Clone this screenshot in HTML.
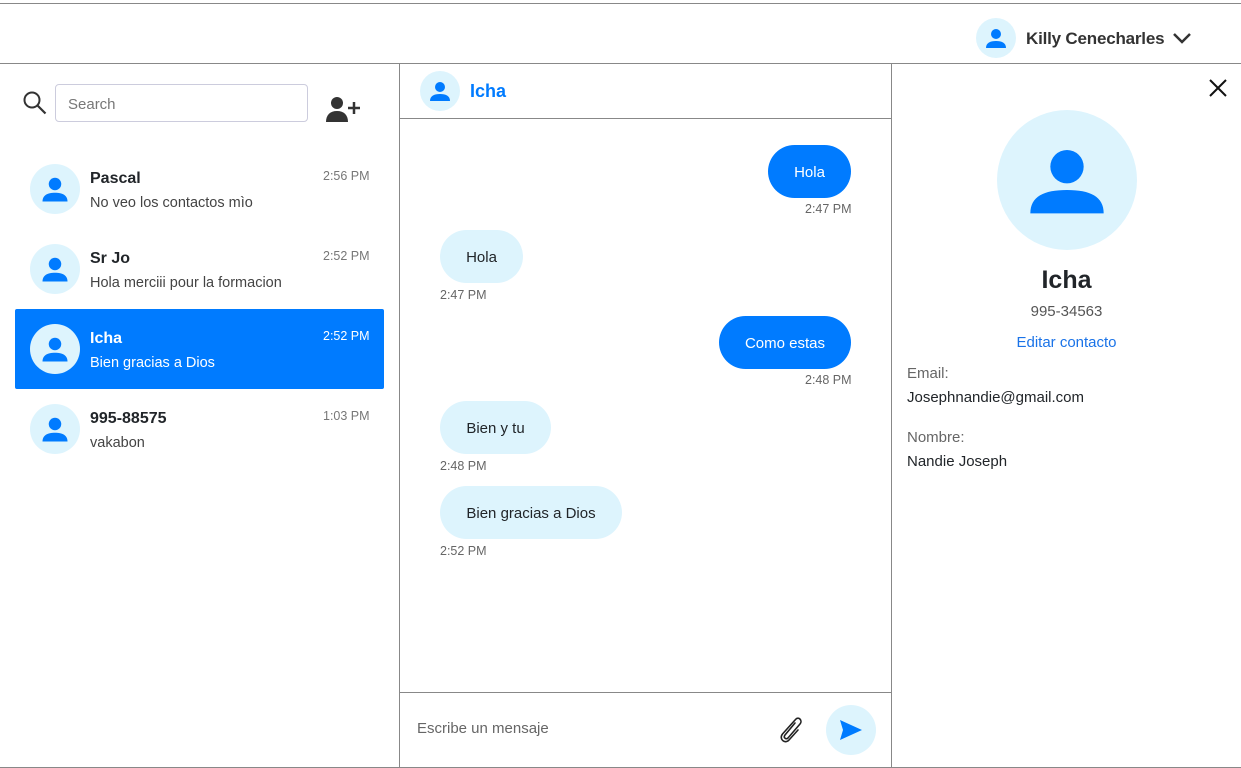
<!DOCTYPE html>
<html><head><meta charset="utf-8"><style>
*{box-sizing:border-box;margin:0;padding:0}
body{width:1241px;height:768px;overflow:hidden;background:#fff;font-family:"Liberation Sans",sans-serif;color:#212529;position:relative}
.abs{position:absolute}
.av{position:absolute;border-radius:50%;background:#ddf4fd;display:flex;align-items:center;justify-content:center}
.name{font-size:16px;font-weight:bold;color:#212529}
.msg{font-size:14.5px;color:#444}
.time{font-size:12.5px;color:#777}
.bub{position:absolute;border-radius:27px;font-size:15px;display:flex;align-items:center;justify-content:center;height:53px;padding-top:2px}
.me{background:#007bff;color:#fff}
.them{background:#ddf4fd;color:#212529}
.t{position:absolute;font-size:12.5px;color:#666}
</style></head><body>
<div class="abs" style="left:0;top:3px;width:1241px;height:1px;background:#888"></div>
<div class="av" style="left:976px;top:18px;width:40px;height:40px"><svg width="24" height="24" viewBox="0 0 24 24"><circle cx="12" cy="8" r="5" fill="#007bff"/><path d="M2 22c0-5 4-7 10-7s10 2 10 7z" fill="#007bff"/></svg></div>
<div class="abs" style="left:1026px;top:29px;font-size:17px;font-weight:bold;color:#333;letter-spacing:-0.2px">Killy Cenecharles</div>
<svg class="abs" style="left:1172px;top:31px" width="20" height="14" viewBox="0 0 20 14"><path d="M2 3l8 8 8-8" stroke="#333" stroke-width="2.5" fill="none"/></svg>

<div class="abs" style="left:0;top:63px;width:1241px;height:705px;border-top:1px solid #888;border-bottom:1px solid #888"></div>
<div class="abs" style="left:399px;top:63px;width:1px;height:705px;background:#888"></div>
<div class="abs" style="left:891px;top:63px;width:1px;height:705px;background:#888"></div>
<div class="abs" style="left:400px;top:118px;width:491px;height:1px;background:#888"></div>
<div class="abs" style="left:400px;top:692px;width:491px;height:1px;background:#888"></div>

<svg class="abs" style="left:22px;top:90px" width="26" height="26" viewBox="0 0 26 26"><circle cx="10" cy="10" r="7.5" stroke="#333" stroke-width="2" fill="none"/><path d="M15.5 15.5l8 8" stroke="#333" stroke-width="2.2"/></svg>
<div class="abs" style="left:55px;top:84px;width:253px;height:38px;border:1px solid #ccd;border-radius:4px;padding:11px 12px;font-size:15px;color:#777">Search</div>
<svg class="abs" style="left:326px;top:96px" width="36" height="26" viewBox="0 0 36 26"><circle cx="11" cy="7" r="6" fill="#333"/><path d="M0 26c0-7 4-11 11-11s11 4 11 11z" fill="#333"/><path d="M22 12h12M28 6v12" stroke="#333" stroke-width="2.5"/></svg>

<div class="abs" style="left:15px;top:309px;width:369px;height:80px;background:#007bff;border-radius:2px"></div>

<div class="av" style="left:30px;top:164px;width:50px;height:50px"><svg width="30" height="30" viewBox="0 0 24 24"><circle cx="12" cy="8" r="5" fill="#007bff"/><path d="M2 22c0-5 4-7 10-7s10 2 10 7z" fill="#007bff"/></svg></div>
<div class="abs name" style="left:90px;top:170px">Pascal</div>
<div class="abs msg" style="left:90px;top:195px">No veo los contactos mìo</div>
<div class="abs time" style="left:323px;top:169px">2:56 PM</div>

<div class="av" style="left:30px;top:244px;width:50px;height:50px"><svg width="30" height="30" viewBox="0 0 24 24"><circle cx="12" cy="8" r="5" fill="#007bff"/><path d="M2 22c0-5 4-7 10-7s10 2 10 7z" fill="#007bff"/></svg></div>
<div class="abs name" style="left:90px;top:250px">Sr Jo</div>
<div class="abs msg" style="left:90px;top:275px">Hola merciii pour la formacion</div>
<div class="abs time" style="left:323px;top:249px">2:52 PM</div>

<div class="av" style="left:30px;top:324px;width:50px;height:50px"><svg width="30" height="30" viewBox="0 0 24 24"><circle cx="12" cy="8" r="5" fill="#007bff"/><path d="M2 22c0-5 4-7 10-7s10 2 10 7z" fill="#007bff"/></svg></div>
<div class="abs name" style="left:90px;top:330px;color:#fff">Icha</div>
<div class="abs msg" style="left:90px;top:355px;color:#fff">Bien gracias a Dios</div>
<div class="abs time" style="left:323px;top:329px;color:#fff">2:52 PM</div>

<div class="av" style="left:30px;top:404px;width:50px;height:50px"><svg width="30" height="30" viewBox="0 0 24 24"><circle cx="12" cy="8" r="5" fill="#007bff"/><path d="M2 22c0-5 4-7 10-7s10 2 10 7z" fill="#007bff"/></svg></div>
<div class="abs name" style="left:90px;top:410px">995-88575</div>
<div class="abs msg" style="left:90px;top:435px">vakabon</div>
<div class="abs time" style="left:323px;top:409px">1:03 PM</div>

<div class="av" style="left:420px;top:71px;width:40px;height:40px"><svg width="24" height="24" viewBox="0 0 24 24"><circle cx="12" cy="8" r="5" fill="#007bff"/><path d="M2 22c0-5 4-7 10-7s10 2 10 7z" fill="#007bff"/></svg></div>
<div class="abs" style="left:470px;top:81px;font-size:18px;font-weight:bold;color:#007bff">Icha</div>

<div class="bub me" style="left:768px;top:145px;width:83px">Hola</div>
<div class="t" style="left:805px;top:202px">2:47 PM</div>
<div class="bub them" style="left:440px;top:230px;width:83px">Hola</div>
<div class="t" style="left:440px;top:288px">2:47 PM</div>
<div class="bub me" style="left:719px;top:316px;width:132px">Como estas</div>
<div class="t" style="left:805px;top:373px">2:48 PM</div>
<div class="bub them" style="left:440px;top:401px;width:111px">Bien y tu</div>
<div class="t" style="left:440px;top:459px">2:48 PM</div>
<div class="bub them" style="left:440px;top:486px;width:182px">Bien gracias a Dios</div>
<div class="t" style="left:440px;top:544px">2:52 PM</div>

<div class="abs" style="left:417px;top:720px;font-size:15px;color:#666">Escribe un mensaje</div>
<svg class="abs" style="left:777px;top:714px" width="28" height="30" viewBox="0 0 28 30"><path d="M18 9L8 21c-2 2.5 1 5 3 3l12-14c3-3.5-1.5-8-4.5-4.5L5.5 20c-4 5 2.5 10.5 6.5 6L21 16" stroke="#222" stroke-width="1.6" fill="none" stroke-linecap="round"/></svg>
<div class="av" style="left:826px;top:705px;width:50px;height:50px"><svg width="24" height="22" viewBox="0 0 24 22"><path d="M1 1l22 10L1 21l3-10z" fill="#007bff"/></svg></div>

<svg class="abs" style="left:1208px;top:78px" width="20" height="20" viewBox="0 0 20 20"><path d="M2 2l16 16M18 2L2 18" stroke="#111" stroke-width="2"/></svg>
<div class="av" style="left:997px;top:110px;width:140px;height:140px"><svg width="80" height="80" viewBox="0 0 24 24"><circle cx="12" cy="8" r="5" fill="#007bff"/><path d="M1 22c0-5 4-7 11-7s11 2 11 7z" fill="#007bff"/></svg></div>
<div class="abs" style="left:892px;top:266px;width:349px;text-align:center;font-size:25px;font-weight:bold;color:#212529">Icha</div>
<div class="abs" style="left:892px;top:303px;width:349px;text-align:center;font-size:15px;color:#555">995-34563</div>
<div class="abs" style="left:892px;top:334px;width:349px;text-align:center;font-size:15px;color:#1a73e8">Editar contacto</div>
<div class="abs" style="left:907px;top:365px;font-size:15px;color:#666">Email:</div>
<div class="abs" style="left:907px;top:389px;font-size:15px;color:#212529">Josephnandie@gmail.com</div>
<div class="abs" style="left:907px;top:429px;font-size:15px;color:#666">Nombre:</div>
<div class="abs" style="left:907px;top:453px;font-size:15px;color:#212529">Nandie Joseph</div>
</body></html>
